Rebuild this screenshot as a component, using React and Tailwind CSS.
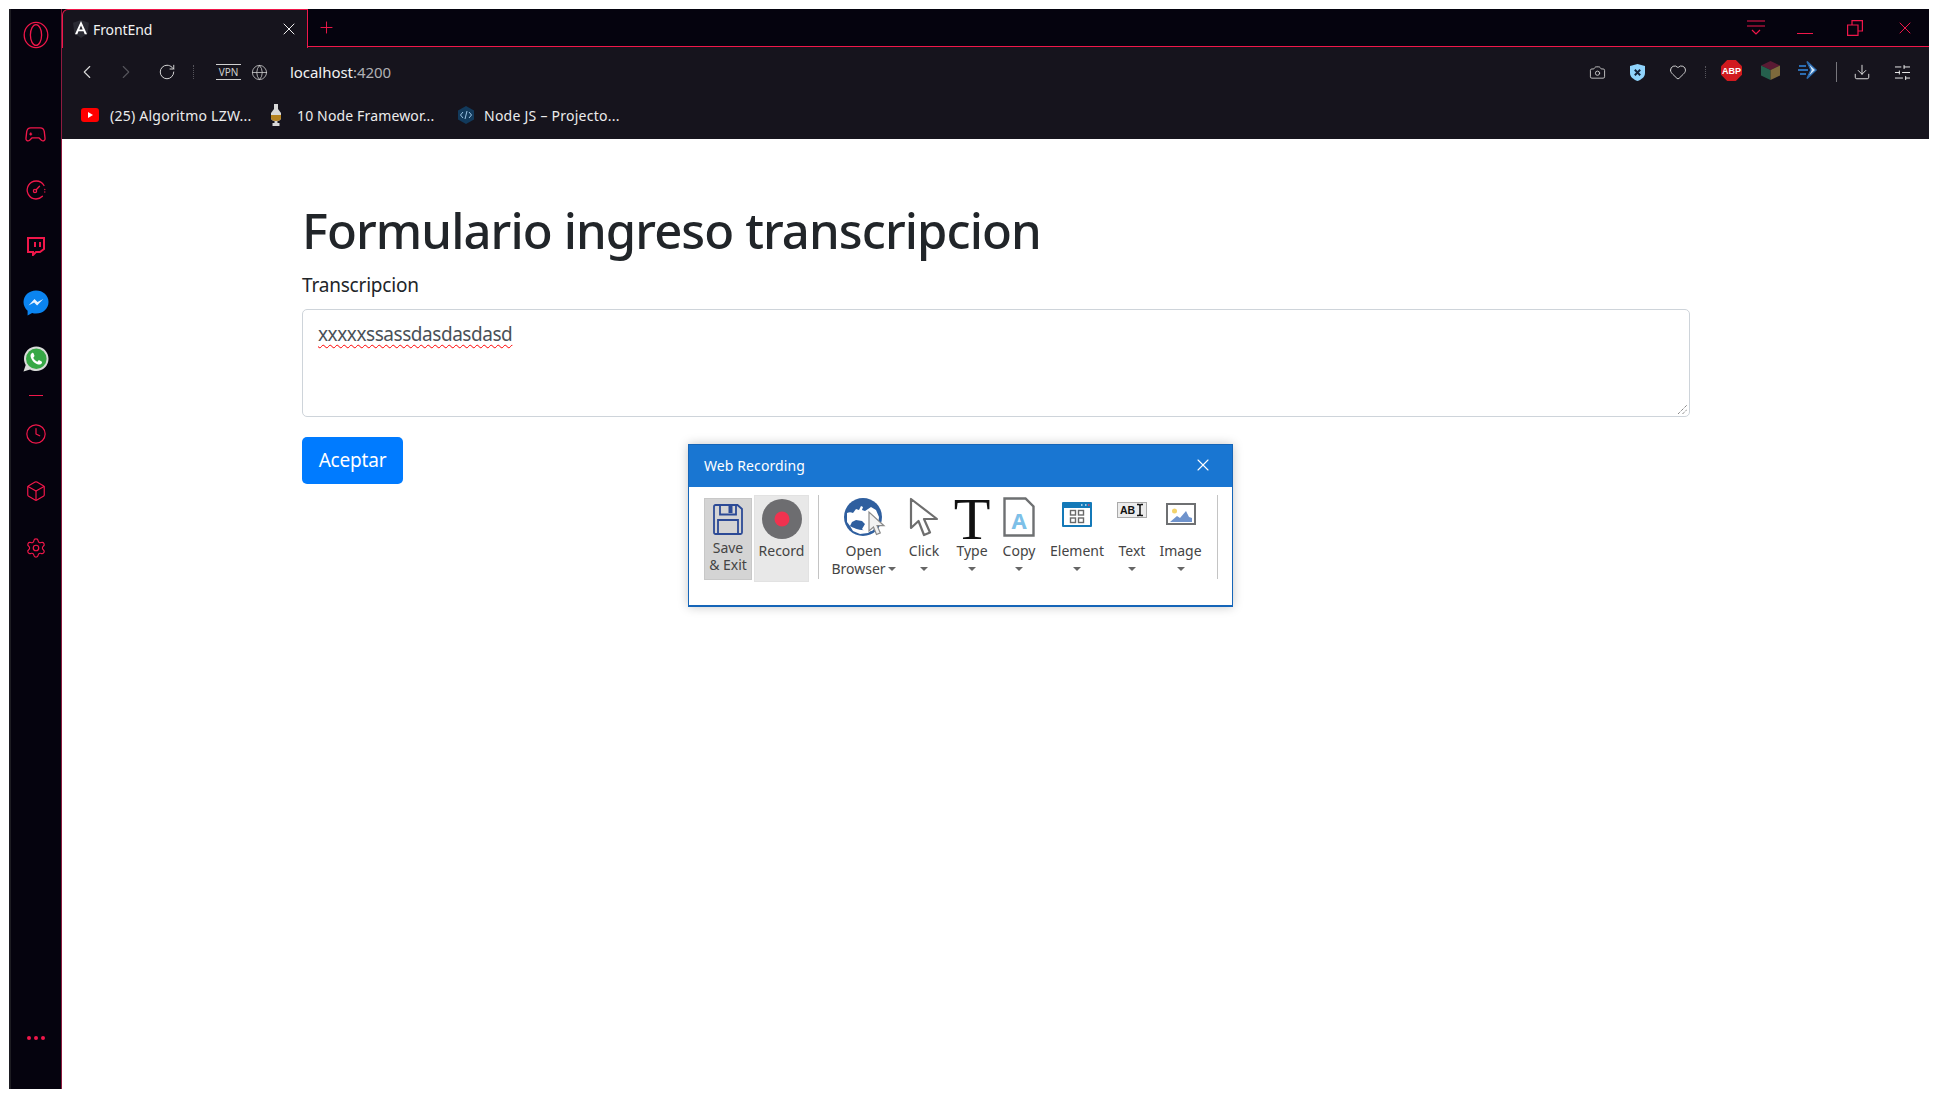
import { X, Plus, ChevronLeft, ChevronRight, RotateCw, Globe, Camera, Heart, Download, SlidersHorizontal, Clock, Box, Settings } from 'lucide-react'

const RED = '#f0174a'

const OperaLogo = () => (
  <svg width="26" height="28" viewBox="0 0 26 28" fill="none" stroke={RED} strokeWidth="1.3">
    <ellipse cx="13" cy="14" rx="11.8" ry="12.6" />
    <ellipse cx="13" cy="14" rx="5.6" ry="10.4" />
  </svg>
)

const GamepadIcon = () => (
  <svg width="21" height="18" viewBox="0 0 22 18" fill="none" stroke={RED} strokeWidth="1.4" strokeLinejoin="round">
    <path d="M6 1.500h10c2.500 0 3.800 1.600 4.200 4l.8 7c.3 2.300-2 3.500-3.800 2L14.500 12h-7L4.800 14.500C3 16 .7 14.800 1 12.500l.8-7c.4-2.400 1.700-4 4.200-4z" />
    <path d="M6 6.500v3M4.500 8h3M14.500 8h.1M16.800 8h.1" />
  </svg>
)

const GaugeIcon = () => (
  <svg width="20" height="20" viewBox="0 0 20 20" fill="none" stroke={RED} strokeWidth="1.300" strokeLinecap="round">
    <path d="M18 5.500A9 9 0 1 0 10 19c2.600 0 4.800-1 6.400-2.700" />
    <circle cx="9" cy="11" r="1.600" />
    <path d="M10.200 9.800l3.300-3.600M18.800 9.500v.1M18.800 12v.1" />
  </svg>
)

const TwitchIcon = () => (
  <svg width="18" height="19" viewBox="0 0 18 19" fill="none" stroke={RED} strokeWidth="2">
    <path d="M1 1h16v11l-4 3H9l-3 3v-3H1z" />
    <path d="M8 5v5M13 5v5" />
  </svg>
)

const MessengerIcon = () => (
  <svg width="26" height="26" viewBox="0 0 26 26">
    <path d="M13 .5C6 .5.500 5.500.500 12c0 3.500 1.600 6.500 4.100 8.700v4.800l4.500-2.500c1.200.4 2.500.6 3.900.6 7 0 12.500-5 12.500-11.600S20 .5 13 .5z" fill="#0a84f0" />
    <path d="M5.500 15.500l6-6.500 3 3 5.800-3-6.200 6.500-3-3z" fill="#e8f3ff" />
  </svg>
)

const WhatsappIcon = () => (
  <svg width="26" height="26" viewBox="0 0 26 26">
    <path d="M13.300.5C6.500.5 1 6 1 12.800c0 2.300.6 4.400 1.700 6.300L.5 25.500l6.600-2c1.800 1 4 1.600 6.200 1.600 6.800 0 12.200-5.500 12.200-12.300S20.100.5 13.300.5z" fill="#d9dcd9" />
    <circle cx="13.300" cy="12.800" r="10.300" fill="#37a846" />
    <path d="M9.300 6.800c-1.200.7-2 2-1.700 3.700.7 3.600 3.700 6.900 7.600 8 1.600.4 3-.3 3.700-1.600.3-.7.200-1.100-.3-1.400l-2.200-1.200c-.5-.2-.8-.1-1.100.3l-.7.900c-.2.200-.5.300-.8.100-1.500-.8-2.700-2-3.500-3.500-.1-.3 0-.5.200-.7l.7-.8c.3-.3.300-.6.200-1L10.500 7.300c-.3-.6-.7-.7-1.200-.5z" fill="#fff" />
  </svg>
)

const AngularIcon = () => (
  <svg width="16" height="18" viewBox="0 0 15 17">
    <path d="M7.500 0L0 2.700l1.200 10L7.500 17l6.300-4.300 1.200-10z" fill="#2a2a33" />
    <path d="M7.500 1L1.800 13.500h2.200l1.100-2.800h4.800l1.100 2.800h2.200zM5.900 9l1.600-3.800L9.100 9z" fill="#fff" />
  </svg>
)

const ShieldIcon = () => (
  <svg width="15" height="17" viewBox="0 0 15 17">
    <path d="M7.500 0L15 2v7c0 4-3.500 6.500-7.500 8C3.500 15.500 0 13 0 9V2z" fill="#8fd3fb" />
    <path d="M4.800 5.800l5.400 5.400M10.200 5.800l-5.400 5.400" stroke="#13233a" strokeWidth="2" />
  </svg>
)

const AbpIcon = () => (
  <svg width="21" height="21" viewBox="0 0 21 21">
    <path d="M6.200 0h8.600L21 6.200v8.600L14.800 21H6.200L0 14.800V6.200z" fill="#d11a1f" />
    <text x="10.500" y="14" textAnchor="middle" fontSize="9" fontWeight="700" fill="#fff" fontFamily="Liberation Sans, sans-serif">ABP</text>
  </svg>
)

const CubeExt = () => (
  <svg width="19" height="19" viewBox="0 0 19 19">
    <path d="M9.500 0L19 4.500 9.500 9 0 4.500z" fill="#5a1a33" />
    <path d="M0 4.500L9.500 9v10L0 14.500z" fill="#25604d" />
    <path d="M19 4.500L9.500 9v10l9.500-4.500z" fill="#7d6a3c" />
  </svg>
)

const ArrowExt = () => (
  <svg width="20" height="20" viewBox="0 0 20 20" fill="none">
    <path d="M9 1.500L18 10l-9 8.500L13 10z" fill="#cfe6fb" stroke="#2c6cb0" strokeWidth="1.500" />
    <path d="M1 6h7M0 10h10M2 14h6" stroke="#2c6cb0" strokeWidth="1.800" />
  </svg>
)

const YoutubeIcon = () => (
  <svg width="18" height="14" viewBox="0 0 18 14">
    <rect width="18" height="14" rx="3" fill="#f00" />
    <path d="M7 4l5 3-5 3z" fill="#fff" />
  </svg>
)

const GlassIcon = () => (
  <svg width="14" height="22" viewBox="0 0 14 22">
    <path d="M5 0h4v5l3 4v5c0 2-2 3-3.500 3v2h2v3H3.500v-3h2v-2C4 17 2 16 2 14V9l3-4z" fill="#d8d8d8" />
    <path d="M2 11h10v3c0 2-2 3-5 3s-5-1-5-3z" fill="#b4811f" />
  </svg>
)

const CodeIcon = () => (
  <svg width="18" height="18" viewBox="0 0 18 18">
    <path d="M9 0l8 4.500v9L9 18l-8-4.500v-9z" fill="#123a5c" />
    <path d="M6 6L3.500 9 6 12M12 6l2.500 3L12 12M10 5L8 13" stroke="#9cc4e4" strokeWidth="1" fill="none" />
  </svg>
)

const MenuIcon = () => (
  <svg width="18" height="16" viewBox="0 0 18 16" fill="none" stroke={RED} strokeWidth="1.200">
    <path d="M0 1h18M0 6h18M5 10l4 4 4-4" />
  </svg>
)

const RestoreIcon = () => (
  <svg width="16" height="16" viewBox="0 0 16 16" fill="none" stroke={RED} strokeWidth="1.200">
    <path d="M.6 5h10.400v10.400H.6zM5 5V.6h10.400V11H11" />
  </svg>
)

const Caret = () => (
  <svg width="8" height="4" viewBox="0 0 8 4" className="shrink-0">
    <path d="M0 0h8L4 4z" fill="#666" />
  </svg>
)

const SaveIcon = () => (
  <svg width="30" height="31" viewBox="0 0 30 31" fill="none" stroke="#2c4a96" strokeWidth="1.800">
    <path d="M2.500 1h22L29 5v23.500a1.500 1.500 0 0 1-1.500 1.500h-25A1.500 1.500 0 0 1 1 28.500v-26A1.500 1.500 0 0 1 2.500 1z" />
    <path d="M7 1v9.500h16V1M5 30V16h20v14" />
    <rect x="15.500" y="2" width="4" height="7" fill="#2c4a96" stroke="none" />
  </svg>
)

const RecordIcon = () => (
  <svg width="40" height="40" viewBox="0 0 40 40">
    <circle cx="20" cy="20" r="20" fill="#6d6d70" />
    <circle cx="20" cy="20" r="7.500" fill="#f0324f" />
  </svg>
)

const GlobeIcon = () => (
  <svg width="42" height="38" viewBox="0 0 42 38">
    <circle cx="19" cy="19" r="19" fill="#2f5f9f" />
    <path d="M3 15c2-1 4-1 6 0l3-4 3 1 2-4 2 1-1 3 3 1 6-4 5 3 3 7-1 8-6 6-7 1-3-3 3-5-3-3-6-1-4 2-2 4-3-4z" fill="#fff" />
    <path d="M6 28c4 2 9 5 17 4l7-2-6 5-8 1-7-3z" fill="#fff" />
    <path d="M25 14v19l4.500-4 3 7.500 3.800-1.600-3.200-7.200H40z" fill="#f2f2f2" stroke="#8a8a8a" strokeWidth="1.200" />
  </svg>
)

const CursorIcon = () => (
  <svg width="30" height="41" viewBox="0 0 30 41" fill="none">
    <path d="M2 2v29l7.500-7 5.500 14 6-2.500-6-13.500H28z" stroke="#6e6e6e" strokeWidth="2.200" strokeLinejoin="round" fill="#fff" />
  </svg>
)

const TypeIcon = () => (
  <svg width="38" height="46" viewBox="0 0 38 46">
    <text x="19" y="44" textAnchor="middle" fontSize="60" fill="#111" fontFamily="Liberation Serif, serif">T</text>
  </svg>
)

const CopyIcon = () => (
  <svg width="32" height="40" viewBox="0 0 32 40" fill="none">
    <path d="M1.500 1.500h21l8 8v29h-29z" stroke="#6e7072" strokeWidth="2.400" fill="#fff" />
    <text x="16" y="32" textAnchor="middle" fontSize="22" fontWeight="700" fill="#7dc0e8" fontFamily="Noto Sans, sans-serif">A</text>
  </svg>
)

const ElementIcon = () => (
  <svg width="30" height="25" viewBox="0 0 30 25">
    <rect width="30" height="25" rx="1" fill="#1479b8" />
    <rect x="2" y="6" width="26" height="17" fill="#fff" />
    <path d="M19 3h1.500M23 3h1.500" stroke="#cfe6f5" strokeWidth="1.500" />
    <path d="M26 3h1.500" stroke="#f0465c" strokeWidth="1.500" />
    <g fill="none" stroke="#6a6a6a" strokeWidth="1.400">
      <rect x="8.500" y="8.500" width="5" height="4.500" />
      <rect x="16.500" y="8.500" width="5" height="4.500" />
      <rect x="8.500" y="16" width="5" height="4.500" />
      <rect x="16.500" y="16" width="5" height="4.500" />
    </g>
  </svg>
)

const TextIcon = () => (
  <svg width="30" height="16" viewBox="0 0 30 16">
    <rect x=".5" y=".5" width="29" height="15" fill="#ececec" stroke="#aaa" />
    <text x="3" y="12" fontSize="10.500" fontWeight="700" fill="#111" fontFamily="Liberation Sans, sans-serif">AB</text>
    <path d="M20 2.500h2l1 1 1-1h2M23 3.500v9M20 13.500h2l1-1 1 1h2" stroke="#111" strokeWidth="1.500" fill="none" />
  </svg>
)

const ImageIcon = () => (
  <svg width="30" height="22" viewBox="0 0 30 22">
    <rect x="1" y="1" width="28" height="20" fill="#fff" stroke="#6e7072" strokeWidth="2" />
    <circle cx="8.500" cy="8" r="2.500" fill="#f3d36b" />
    <path d="M4 19l7-6 3 2 6-7 3 6 3 1v4z" fill="#6f93cc" />
  </svg>
)

const Tool = ({ width, label, icon }) => (
  <div className="flex flex-col items-center shrink-0" style={{ width }}>
    <div className="h-[46px] flex items-start justify-center">{icon}</div>
    <span className="text-[14px] leading-[20px] whitespace-nowrap">{label}</span>
    <div className="mt-[6px]"><Caret /></div>
  </div>
)

export default function App() {
  return (
    <div className="h-[1098px] w-[1938px] bg-white p-[9px] overflow-hidden font-['Noto_Sans',sans-serif]">
      <div className="flex h-[1080px] w-[1920px]">
        {/* Sidebar */}
        <aside className="w-[53px] shrink-0 bg-[#05030e] border-l-[2px] border-l-[#1d1c22] border-r border-r-[#8f1b3f] flex flex-col items-center pr-[1px]">
          <div className="mt-[12px]"><OperaLogo /></div>
          <div className="mt-[77px] h-[18px] flex items-center"><GamepadIcon /></div>
          <div className="mt-[36px]"><GaugeIcon /></div>
          <div className="mt-[37px]"><TwitchIcon /></div>
          <div className="mt-[34px]"><MessengerIcon /></div>
          <div className="mt-[30px]"><WhatsappIcon /></div>
          <div className="mt-[23px] w-[14px] h-px bg-[#f0174a]" />
          <Clock className="mt-[27px]" size={22} strokeWidth={1.3} color={RED} />
          <Box className="mt-[35px]" size={22} strokeWidth={1.3} color={RED} />
          <Settings className="mt-[35px]" size={22} strokeWidth={1.3} color={RED} />
          <div className="mt-auto mb-[49px] flex gap-[3px]">
            <span className="w-[4px] h-[4px] rounded-full bg-[#f0174a]" />
            <span className="w-[4px] h-[4px] rounded-full bg-[#f0174a]" />
            <span className="w-[4px] h-[4px] rounded-full bg-[#f0174a]" />
          </div>
        </aside>

        <div className="flex-1 flex flex-col min-w-0">
          {/* Tab strip */}
          <div className="h-[38px] flex bg-[#05030e] shrink-0">
            <div className="w-[246px] h-[39px] bg-[#16141d] border-t border-r border-l border-[#f0174a] rounded-tl-[6px] flex items-center pl-[10px] pr-[8px] relative z-10">
              <AngularIcon />
              <span className="ml-[4px] text-[14px] text-[#f2f2f2] tracking-[-0.1px]">FrontEnd</span>
              <X className="ml-auto" size={20} strokeWidth={1.2} color="#f0f0f0" />
            </div>
            <div className="flex-1 flex items-center border-b border-[#f0174a] pr-[14px]">
              <Plus className="ml-[9px]" size={19} strokeWidth={1.2} color={RED} />
              <div className="ml-auto flex items-center">
                <MenuIcon />
                <div className="ml-[32px] w-[16px] h-px bg-[#f0174a] mt-[12px]" />
                <div className="ml-[34px]"><RestoreIcon /></div>
                <X className="ml-[32px]" size={20} strokeWidth={1.2} color={RED} />
              </div>
            </div>
          </div>

          {/* Address bar */}
          <div className="h-[46px] bg-[#16141d] flex items-center shrink-0 text-[#e6e6e6] pr-[17px] pt-[4px]">
            <ChevronLeft className="ml-[14px]" size={22} strokeWidth={1.2} color="#d8d8d8" />
            <ChevronRight className="ml-[17px]" size={22} strokeWidth={1.2} color="#55545b" />
            <RotateCw className="ml-[21px]" size={18} strokeWidth={1.3} color="#d8d8d8" />
            <div className="ml-[17px] h-[14px] w-px border-l border-dotted border-[#55545b]" />
            <span className="ml-[22px] w-[25px] h-[16px] border-y border-[#d0d0d0] text-[10px] leading-[14px] text-center text-[#d0d0d0]">VPN</span>
            <Globe className="ml-[10px]" size={17} strokeWidth={1.1} color="#d0d0d0" />
            <span className="ml-[22px] text-[15px] tracking-[-0.05px] text-[#f2f2f2]">localhost<span className="text-[#b0b0b4]">:4200</span></span>

            <div className="ml-auto flex items-center">
              <Camera size={17} strokeWidth={1.2} color="#d8d8d8" />
              <div className="ml-[24px]"><ShieldIcon /></div>
              <Heart className="ml-[24px]" size={18} strokeWidth={1.2} color="#e0e0e0" />
              <div className="ml-[18px] h-[12px] w-px border-l border-dotted border-[#55545b]" />
              <div className="ml-[15px] -mt-[4px]"><AbpIcon /></div>
              <div className="ml-[19px] -mt-[4px]"><CubeExt /></div>
              <div className="ml-[18px] -mt-[4px]"><ArrowExt /></div>
              <div className="ml-[18px] h-[20px] w-px bg-[#77767c]" />
              <Download className="ml-[16px]" size={18} strokeWidth={1.2} color="#f0f0f0" />
              <SlidersHorizontal className="ml-[22px]" size={19} strokeWidth={1.2} color="#f0f0f0" />
            </div>
          </div>

          {/* Bookmarks */}
          <div className="h-[46px] bg-[#16141d] flex items-center shrink-0 text-[14px] text-[#ececec] tracking-[0.25px] pb-[2px]">
            <div className="ml-[19px]"><YoutubeIcon /></div>
            <span className="ml-[11px] w-[142px] whitespace-nowrap">(25) Algoritmo LZW...</span>
            <div className="ml-[17px]"><GlassIcon /></div>
            <span className="ml-[14px] w-[140px] whitespace-nowrap tracking-[0.15px]">10 Node Framewor...</span>
            <div className="ml-[20px]"><CodeIcon /></div>
            <span className="ml-[9px] whitespace-nowrap">Node JS – Projecto...</span>
          </div>

          {/* Page */}
          <main className="flex-1 bg-white relative pl-[240px] pr-[239px] text-[#212529]">
            <h1 className="mt-[61px] text-[49px] leading-[60px] font-medium tracking-[-0.9px] whitespace-nowrap">Formulario ingreso transcripcion</h1>
            <label className="block mt-[10px] text-[19px] leading-[30px] tracking-[-0.2px]">Transcripcion</label>
            <div className="relative mt-[9px] h-[108px] rounded-[5px] border border-[#ced4da] px-[15px] pt-[9px] text-[19px] leading-[30px] text-[#495057] tracking-[-0.45px]">
              <span className="underline decoration-wavy decoration-[#ff0000] decoration-[1px] underline-offset-[3px]">xxxxxssassdasdasdasd</span>
              <svg className="absolute right-[2px] bottom-[2px]" width="9" height="9" viewBox="0 0 9 9" stroke="#555" fill="none">
                <path d="M0 9l9-9M4.500 9L9 4.500" strokeDasharray="1 1" />
              </svg>
            </div>
            <button className="block mt-[20px] w-[101px] h-[47px] rounded-[5px] bg-[#007bff] text-white text-[19px] tracking-[-0.2px]">Aceptar</button>

            {/* Recorder window */}
            <div className="absolute left-[626px] top-[305px] w-[545px] h-[163px] bg-white border border-[#1565b8] border-b-[2px] shadow-[0_0_10px_rgba(0,0,0,0.22)] text-[#444]">
              <div className="h-[42px] bg-[#1976d2] flex items-center justify-between pl-[15px] pr-[19px] pb-[2px] text-white">
                <span className="text-[14px] tracking-[0.1px]">Web Recording</span>
                <X size={20} strokeWidth={1.3} color="#fff" />
              </div>
              <div className="flex items-start pl-[15px] pt-[8px]">
                <div className="mt-[3px] w-[48px] h-[82px] bg-[#d4d4d4] border border-[#c8c8c8] flex flex-col items-center pt-[5px] text-[14px] leading-[17px] shrink-0">
                  <SaveIcon />
                  <span className="mt-[4px]">Save</span>
                  <span className="whitespace-nowrap">&amp; Exit</span>
                </div>
                <div className="ml-[2px] w-[55px] h-[87px] bg-[#e8e8e8] border border-[#e2e2e2] flex flex-col items-center pt-[3px] shrink-0">
                  <RecordIcon />
                  <span className="mt-[2px] text-[14px] leading-[20px]">Record</span>
                </div>
                <div className="ml-[9px] w-px h-[84px] bg-[#c4c4c4] shrink-0" />
                <div className="ml-[13px] flex">
                  <div className="w-[62px] flex flex-col items-center shrink-0 pl-[1px]">
                    <div className="h-[47px] flex items-start pt-[3px] pl-[3px]"><GlobeIcon /></div>
                    <span className="text-[14px] leading-[18px]">Open</span>
                    <span className="text-[14px] leading-[18px] flex items-center gap-[2px] whitespace-nowrap">Browser<Caret /></span>
                  </div>
                  <div className="ml-[6px] flex">
                    <Tool width={48} label="Click" icon={<div className="mt-[2px]"><CursorIcon /></div>} />
                    <Tool width={48} label="Type" icon={<TypeIcon />} />
                    <Tool width={46} label="Copy" icon={<div className="mt-[2px]"><CopyIcon /></div>} />
                    <Tool width={70} label="Element" icon={<div className="mt-[7px]"><ElementIcon /></div>} />
                    <Tool width={40} label="Text" icon={<div className="mt-[7px]"><TextIcon /></div>} />
                    <Tool width={57} label="Image" icon={<div className="mt-[8px]"><ImageIcon /></div>} />
                  </div>
                </div>
                <div className="ml-[8px] w-px h-[84px] bg-[#c4c4c4] shrink-0" />
              </div>
            </div>
          </main>
        </div>
      </div>
    </div>
  )
}
